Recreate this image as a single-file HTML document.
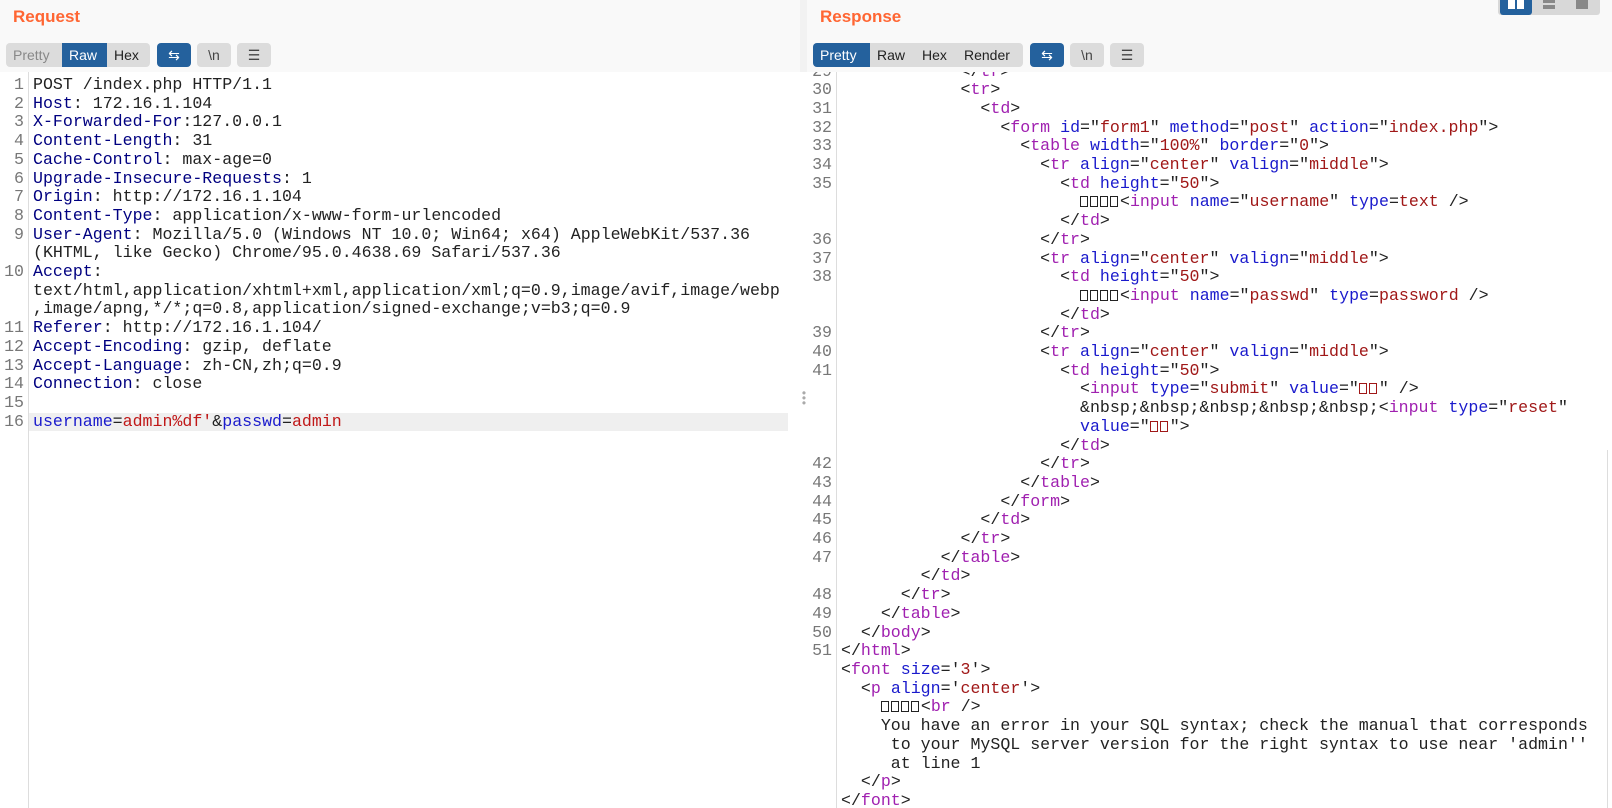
<!DOCTYPE html>
<html><head><meta charset="utf-8"><style>
*{margin:0;padding:0;box-sizing:border-box}
body{width:1612px;height:808px;background:#fff;position:relative;overflow:hidden;font-family:"Liberation Sans",sans-serif}
.hdr{position:absolute;top:0;height:72px;background:#f9f9f9}
.title{position:absolute;top:7px;font-weight:bold;font-size:17px;color:#ff6633}
.grp{position:absolute;top:43px;height:24px;background:#dcdcdc;border-radius:4px;display:flex;overflow:hidden;font-size:14px}
.grp div{padding:0 7px;line-height:24px;color:#222}
.grp .on{background:#24619d;color:#fff}
.grp .dis{color:#888}
.btn{position:absolute;top:43px;height:24px;width:34px;border-radius:4px;background:#dcdcdc;color:#444;font-size:14px;text-align:center;line-height:24px}
.btn.on{background:#24619d;color:#fff}
.code{position:absolute;font-family:"Liberation Mono",monospace;font-size:16.6px;line-height:18.7px;white-space:pre;color:#222}
.gut{position:absolute;font-family:"Liberation Mono",monospace;font-size:16.6px;line-height:18.7px;white-space:pre;color:#777;text-align:right}
.k{color:#000080}.r{color:#c01818}
.t{color:#a020b0}.a{color:#1a1acc}.v{color:#a01818}
.bx{display:inline-block;width:8px;height:11px;border:1.3px solid #222;margin-right:2px;vertical-align:-1px}
.v .bx{border-color:#a01818}
</style></head><body>
<div class="hdr" style="left:0;width:800px"></div>
<div class="hdr" style="left:800px;width:812px;background:#f9f9f9"></div>
<div style="position:absolute;left:800px;top:0;width:7px;height:72px;background:#f2f2f2"></div>
<div class="title" style="left:13px">Request</div>
<div class="title" style="left:820px">Response</div>

<div class="grp" style="left:6px"><div class="dis" style="width:56px">Pretty</div><div class="on" style="width:45px">Raw</div><div style="width:43px">Hex</div></div>
<div class="btn on" style="left:157px">&#8646;</div>
<div class="btn" style="left:197px">\n</div>
<div class="btn" style="left:237px">&#9776;</div>

<div class="grp" style="left:813px"><div class="on" style="width:57px">Pretty</div><div style="width:45px">Raw</div><div style="width:42px">Hex</div><div style="width:66px">Render</div></div>
<div class="btn on" style="left:1030px">&#8646;</div>
<div class="btn" style="left:1070px">\n</div>
<div class="btn" style="left:1110px">&#9776;</div>

<div style="position:absolute;left:1498px;top:0;width:102px;height:15px;background:#d8d8d8;border-radius:0 0 3px 3px"></div>
<div style="position:absolute;left:1500px;top:0;width:32px;height:15px;background:#24619d;border-radius:0 0 3px 3px"></div>
<div style="position:absolute;left:1508px;top:0;width:7px;height:9px;background:#fff"></div>
<div style="position:absolute;left:1517px;top:0;width:7px;height:9px;background:#fff"></div>
<div style="position:absolute;left:1543px;top:0;width:12px;height:3px;background:#888"></div>
<div style="position:absolute;left:1543px;top:5px;width:12px;height:4px;background:#888"></div>
<div style="position:absolute;left:1576px;top:0;width:12px;height:9px;background:#888"></div>

<div style="position:absolute;left:28px;top:72px;width:1px;height:736px;background:#ddd"></div>
<div style="position:absolute;left:29px;top:412.6px;width:759px;height:18.7px;background:#efefef"></div>
<div style="position:absolute;left:801px;top:391px;color:#aaa;font-size:12px;line-height:5px;width:6px;text-align:center">•<br>•<br>•</div>
<div class="gut" style="left:0;top:76px;width:24px">1
2
3
4
5
6
7
8
9

10


11
12
13
14
15
16</div>
<div class="code" style="left:33px;top:76px">POST /index.php HTTP/1.1
<span class="k">Host</span>: 172.16.1.104
<span class="k">X-Forwarded-For</span>:127.0.0.1
<span class="k">Content-Length</span>: 31
<span class="k">Cache-Control</span>: max-age=0
<span class="k">Upgrade-Insecure-Requests</span>: 1
<span class="k">Origin</span>: http://172.16.1.104
<span class="k">Content-Type</span>: application/x-www-form-urlencoded
<span class="k">User-Agent</span>: Mozilla/5.0 (Windows NT 10.0; Win64; x64) AppleWebKit/537.36
(KHTML, like Gecko) Chrome/95.0.4638.69 Safari/537.36
<span class="k">Accept</span>:
text/html,application/xhtml+xml,application/xml;q=0.9,image/avif,image/webp
,image/apng,*/*;q=0.8,application/signed-exchange;v=b3;q=0.9
<span class="k">Referer</span>: http://172.16.1.104/
<span class="k">Accept-Encoding</span>: gzip, deflate
<span class="k">Accept-Language</span>: zh-CN,zh;q=0.9
<span class="k">Connection</span>: close

<span class="a">username</span>=<span class="r">admin%df'</span>&amp;<span class="a">passwd</span>=<span class="r">admin</span></div>

<div style="position:absolute;left:836px;top:72px;width:1px;height:736px;background:#ddd"></div>
<div style="position:absolute;left:1607px;top:450px;width:1px;height:358px;background:#ddd"></div>
<div style="position:absolute;left:807px;top:72px;width:805px;height:736px;overflow:hidden">
<div class="gut" style="left:0;top:-9.5px;width:25px">29
30
31
32
33
34
35


36
37
38


39
40
41




42
43
44
45
46
47

48
49
50
51</div>
<div class="code" style="left:34px;top:-9.5px">            &lt;/<span class="t">tr</span>&gt;
            &lt;<span class="t">tr</span>&gt;
              &lt;<span class="t">td</span>&gt;
                &lt;<span class="t">form</span> <span class="a">id</span>="<span class="v">form1</span>" <span class="a">method</span>="<span class="v">post</span>" <span class="a">action</span>="<span class="v">index.php</span>"&gt;
                  &lt;<span class="t">table</span> <span class="a">width</span>="<span class="v">100%</span>" <span class="a">border</span>="<span class="v">0</span>"&gt;
                    &lt;<span class="t">tr</span> <span class="a">align</span>="<span class="v">center</span>" <span class="a">valign</span>="<span class="v">middle</span>"&gt;
                      &lt;<span class="t">td</span> <span class="a">height</span>="<span class="v">50</span>"&gt;
                        <span class="bx"></span><span class="bx"></span><span class="bx"></span><span class="bx"></span>&lt;<span class="t">input</span> <span class="a">name</span>="<span class="v">username</span>" <span class="a">type</span>=<span class="v">text</span> /&gt;
                      &lt;/<span class="t">td</span>&gt;
                    &lt;/<span class="t">tr</span>&gt;
                    &lt;<span class="t">tr</span> <span class="a">align</span>="<span class="v">center</span>" <span class="a">valign</span>="<span class="v">middle</span>"&gt;
                      &lt;<span class="t">td</span> <span class="a">height</span>="<span class="v">50</span>"&gt;
                        <span class="bx"></span><span class="bx"></span><span class="bx"></span><span class="bx"></span>&lt;<span class="t">input</span> <span class="a">name</span>="<span class="v">passwd</span>" <span class="a">type</span>=<span class="v">password</span> /&gt;
                      &lt;/<span class="t">td</span>&gt;
                    &lt;/<span class="t">tr</span>&gt;
                    &lt;<span class="t">tr</span> <span class="a">align</span>="<span class="v">center</span>" <span class="a">valign</span>="<span class="v">middle</span>"&gt;
                      &lt;<span class="t">td</span> <span class="a">height</span>="<span class="v">50</span>"&gt;
                        &lt;<span class="t">input</span> <span class="a">type</span>="<span class="v">submit</span>" <span class="a">value</span>="<span class="v"><span class="bx"></span><span class="bx"></span></span>" /&gt;
                        &amp;nbsp;&amp;nbsp;&amp;nbsp;&amp;nbsp;&amp;nbsp;&lt;<span class="t">input</span> <span class="a">type</span>="<span class="v">reset</span>"
                        <span class="a">value</span>="<span class="v"><span class="bx"></span><span class="bx"></span></span>"&gt;
                      &lt;/<span class="t">td</span>&gt;
                    &lt;/<span class="t">tr</span>&gt;
                  &lt;/<span class="t">table</span>&gt;
                &lt;/<span class="t">form</span>&gt;
              &lt;/<span class="t">td</span>&gt;
            &lt;/<span class="t">tr</span>&gt;
          &lt;/<span class="t">table</span>&gt;
        &lt;/<span class="t">td</span>&gt;
      &lt;/<span class="t">tr</span>&gt;
    &lt;/<span class="t">table</span>&gt;
  &lt;/<span class="t">body</span>&gt;
&lt;/<span class="t">html</span>&gt;
&lt;<span class="t">font</span> <span class="a">size</span>='<span class="v">3</span>'&gt;
  &lt;<span class="t">p</span> <span class="a">align</span>='<span class="v">center</span>'&gt;
    <span class="bx"></span><span class="bx"></span><span class="bx"></span><span class="bx"></span>&lt;<span class="t">br</span> /&gt;
    You have an error in your SQL syntax; check the manual that corresponds
     to your MySQL server version for the right syntax to use near 'admin''
     at line 1
  &lt;/<span class="t">p</span>&gt;
&lt;/<span class="t">font</span>&gt;</div>
</div>
</body></html>
